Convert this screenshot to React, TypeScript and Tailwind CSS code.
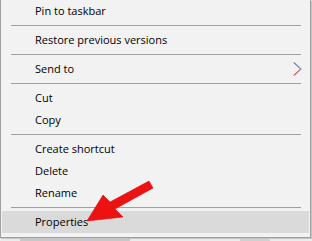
import React from "react";

const Item = ({ label, active, arrow }: { label: string; active?: boolean; arrow?: boolean }) => (
  <div className={`relative mx-px h-[22px] leading-[22px] pl-[33px] text-[11px] text-black ${active ? "bg-[#dadada]" : ""}`}>
    {label}
    {arrow && (
      <svg className="absolute left-[290px] top-[3px]" width="12" height="16" viewBox="0 0 12 16">
        <polyline points="1.5,1.5 8.5,8 1.5,14.5" fill="none" stroke="#e04848" strokeWidth="1" />
        <polyline points="2.5,1.5 9.5,8 2.5,14.5" fill="none" stroke="#4a70d8" strokeWidth="0.8" opacity="0.8" />
      </svg>
    )}
  </div>
);

const Sep = () => (
  <div className="h-[7px] flex items-center">
    <div className="ml-[10px] w-[290px] h-px bg-[#a0a0a0]" />
  </div>
);

export default function App() {
  return (
    <div
      className="relative w-[312px] h-[241px] overflow-hidden bg-[#ececec]"
      style={{ fontFamily: '"Segoe UI", "Open Sans", "Noto Sans", sans-serif' }}
    >
      <div className="w-[311px] h-[238px] bg-[#f2f2f2] border-l border-r border-b border-[#a0a0a0] shadow-[1px_1px_0_#c4c4c4]">
        <Item label="Pin to taskbar" />
        <Sep />
        <Item label="Restore previous versions" />
        <Sep />
        <Item label="Send to" arrow />
        <Sep />
        <Item label="Cut" />
        <Item label="Copy" />
        <Sep />
        <Item label="Create shortcut" />
        <Item label="Delete" />
        <Item label="Rename" />
        <Sep />
        <Item label="Properties" active />
      </div>
      <div className="absolute left-[20px] top-[239px] w-[110px] h-[2px] bg-[#c8c8c8]" />
      <div className="absolute left-[240px] top-[239px] w-[30px] h-[2px] bg-[#d0d0d0]" />
      <svg className="absolute left-0 top-0 pointer-events-none" width="312" height="241" viewBox="0 0 312 241">
        <polygon
          points="87,221 103,195 110,202 149,181 153,188 115,209 123,217"
          fill="#ee1111"
          stroke="#d80c0c"
          strokeWidth="0.6"
          strokeLinejoin="round"
        />
      </svg>
    </div>
  );
}
